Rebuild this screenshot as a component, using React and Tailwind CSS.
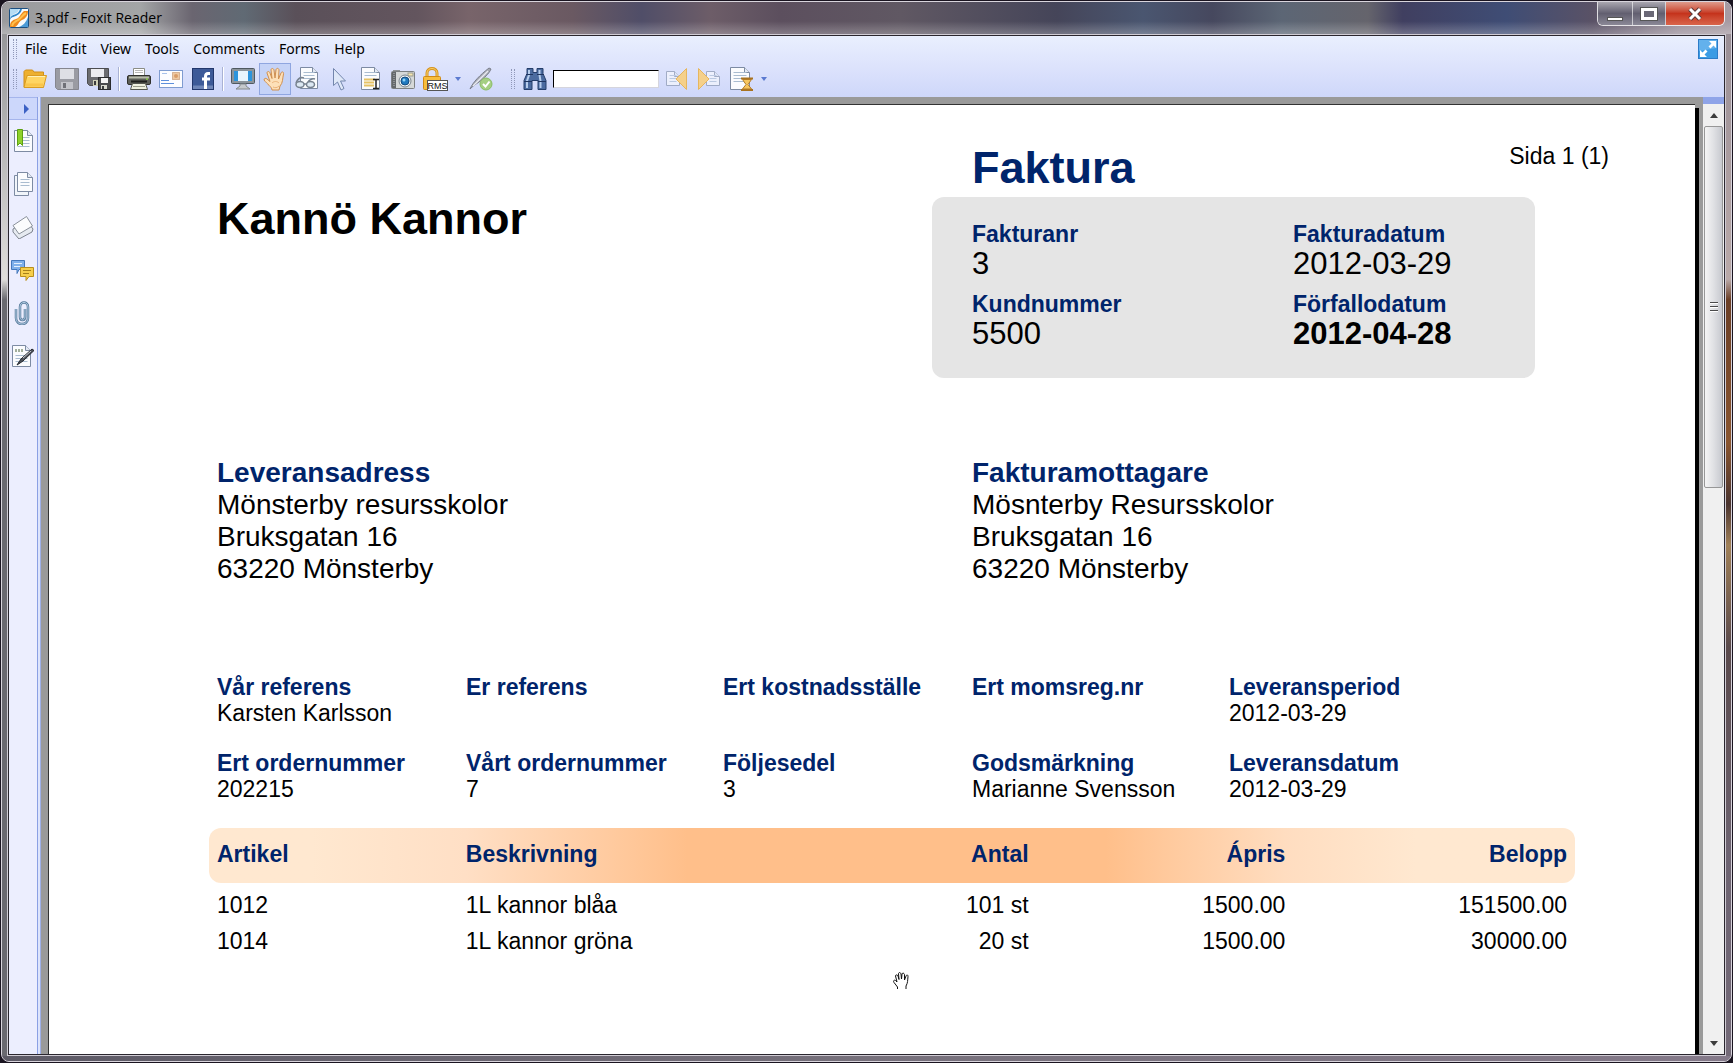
import React from 'react';

const menuItems = ['File', 'Edit', 'View', 'Tools', 'Comments', 'Forms', 'Help'];

const references = [
  [
    { label: 'Vår referens', value: 'Karsten Karlsson' },
    { label: 'Er referens', value: '' },
    { label: 'Ert kostnadsställe', value: '' },
    { label: 'Ert momsreg.nr', value: '' },
    { label: 'Leveransperiod', value: '2012-03-29' },
  ],
  [
    { label: 'Ert ordernummer', value: '202215' },
    { label: 'Vårt ordernummer', value: '7' },
    { label: 'Följesedel', value: '3' },
    { label: 'Godsmärkning', value: 'Marianne Svensson' },
    { label: 'Leveransdatum', value: '2012-03-29' },
  ],
];

const rows = [
  { article: '1012', text: '1L kannor blåa', qty: '101 st', price: '1500.00', sum: '151500.00' },
  { article: '1014', text: '1L kannor gröna', qty: '20 st', price: '1500.00', sum: '30000.00' },
];

/* ---------- icons ---------- */

function Icon({ children }) {
  return (
    <svg width="24" height="24" viewBox="0 0 24 24" fill="none" className="shrink-0" aria-hidden="true">
      {children}
    </svg>
  );
}

// Sheet of paper with a folded corner, used as a base by several icons
function Sheet({ x = 3, y = 1, w = 18, h = 21, lines = [8, 11, 14, 17] }) {
  return (
    <>
      <path d={`M${x} ${y}h${w - 5}l5 5v${h - 5}h${-w}z`} fill="#fbfcfe" stroke="#7d8ba3" />
      <path d={`M${x + w - 5} ${y}v5h5`} fill="#e3e9f3" stroke="#7d8ba3" />
      {lines.map(l => (
        <path key={l} d={`M${x + 3} ${l + 0.5}h${w - 6}`} stroke="#a9bcd0" />
      ))}
    </>
  );
}

function FoxitLogo() {
  return (
    <svg width="20" height="20" viewBox="0 0 20 20" className="shrink-0" aria-hidden="true">
      <rect x="0.5" y="0.5" width="19" height="19" rx="1" fill="#f7fafc" stroke="#1d4f80" />
      <path d="M1 1h9c-1 3-2 4-5 5-2 1-3 2-4 5z" fill="#b5dcf5" />
      <path d="M1 12c0-4 3-5 6-6 2-1 3-2 4-5h2c-1 4-3 5-6 7-3 1-5 1-6 4z" fill="#2f86cb" />
      <path d="M19 9v10h-9c5-2 7-5 9-10z" fill="#4b9ad6" />
      <path d="M1 19c0-6 3-7 6-8 4-1 4-5 8-8h4c0 5-3 8-6 9-4 2-3 5-7 7z" fill="#f08a1c" />
      <path d="M3 18c1-4 3-4 6-6 3-1 4-5 8-7" stroke="#ffc04d" strokeWidth="2" fill="none" />
    </svg>
  );
}

const OpenIcon = () => (
  <Icon>
    <path d="M1 20V4.500L2.500 3h7L11 5h9.500v15z" fill="#eeb02f" stroke="#d08f18" />
    <path d="M4 8.500h19.500L20.500 20.500H1z" fill="#ffd563" stroke="#d99c23" />
    <path d="M5 9.500h17" stroke="#fff0b5" />
    <path d="M2 18h18" stroke="#f6bb3a" strokeWidth="3" opacity="0.6" />
  </Icon>
);

const SaveIcon = () => (
  <Icon>
    <path d="M0.500 1.500h23v21H2.500l-2-2z" fill="#9a9ba3" stroke="#85868f" />
    <rect x="5" y="2" width="14" height="10" fill="#dedfe5" />
    <rect x="6" y="15" width="12" height="7" fill="#c2c3ca" />
    <rect x="8" y="16" width="3" height="5" fill="#6f7078" />
  </Icon>
);

const SaveAsIcon = () => (
  <Icon>
    <path d="M0.500 1.500h21v17H2.500l-2-2z" fill="#6b6c70" stroke="#4c4d51" />
    <rect x="4" y="2" width="13" height="8" fill="#ececf0" />
    <rect x="6" y="13" width="6" height="6" fill="#cfd0b8" />
    <rect x="7" y="14" width="2" height="4" fill="#3b3c3e" />
    <rect x="11.5" y="10.5" width="12" height="12" fill="#4a4b4e" stroke="#2a2b2d" />
    <rect x="14" y="11" width="7" height="5" fill="#f4f4f4" />
    <rect x="14" y="18" width="6" height="4" fill="#d9dad0" />
    <rect x="15" y="19" width="2" height="3" fill="#3b3c3e" />
  </Icon>
);

const PrintIcon = () => (
  <Icon>
    <path d="M6.500 9V1.500h11V9" fill="#fff" stroke="#8b8d85" />
    <path d="M8 3.500h8M8 5.500h8" stroke="#b9b9b9" />
    <rect x="0.5" y="8.5" width="23" height="9" rx="1.5" fill="#5c5e58" stroke="#30312d" />
    <path d="M2 10.500h20" stroke="#b8bbab" strokeWidth="2" />
    <path d="M4 14.500h16" stroke="#1d1e1b" strokeWidth="2" />
    <path d="M3.500 22.500l2-6h13l2 6z" fill="#eef0df" stroke="#55574f" />
    <path d="M6 19.500h12" stroke="#9b9e8c" />
    <circle cx="20" cy="12" r="1" fill="#8ed04b" />
  </Icon>
);

const MailIcon = () => (
  <Icon>
    <rect x="0.5" y="3.5" width="23" height="17" fill="#fdfdff" stroke="#7f9cd0" />
    <rect x="13.5" y="5.5" width="7" height="7" fill="#efc9a2" stroke="#b98055" strokeDasharray="1 1" />
    <circle cx="17" cy="9" r="2" fill="#d89c68" />
    <path d="M2 13.500h8M2 16.500h13" stroke="#5d8fdc" />
    <path d="M3 6.500h5" stroke="#a9c2ea" />
  </Icon>
);

const FacebookIcon = () => (
  <Icon>
    <rect x="1.5" y="1.5" width="21" height="21" fill="#3d5a98" stroke="#22376c" />
    <path d="M2 18.500h20v3.500H2z" fill="#6f86b8" />
    <path d="M19 6.500h-2c-2 0-2.500 1-2.500 3V22M11 12h8" stroke="#fff" strokeWidth="3" />
  </Icon>
);

const ScreenIcon = () => (
  <Icon>
    <rect x="0.5" y="1.5" width="23" height="15" rx="1" fill="#8b949b" stroke="#4f5960" />
    <rect x="3" y="4" width="18" height="10" fill="#2c94dc" />
    <rect x="7" y="4" width="10" height="10" fill="#e8f5fd" />
    <path d="M9 17h6v2l4 3H5l4-3z" fill="#c5c9cc" stroke="#848a8e" />
  </Icon>
);

const HandIcon = () => (
  <Icon>
    <path
      d="M9 23c0-3-5-6-8-10 0-2 2-2 3-1l3 2.500L4 6c0-2 2.500-2 3 0l2 5.500L8 3c0-2 2.500-2 3 0l1 8 1-8.500c1-2 3-1 3 .5l-.5 9 2.500-6c1-2 3-1 2.500 1-1 4-.5 9-3.500 12l-1 4z"
      fill="#fde0b8"
      stroke="#cf8f4e"
    />
    <path d="M10 20c2 1 4 1 6-1M9 16c2-2 5-2 7 0" stroke="#eab27a" />
  </Icon>
);

const ReadIcon = () => (
  <Icon>
    <Sheet x={5.5} y={0.5} w={17} h={21} lines={[5, 8, 11]} />
    <path d="M1 16c2-5 5-6 8-5M13 15c2-3 4-4 7-3" stroke="#77828f" strokeWidth="1.5" />
    <ellipse cx="5" cy="17.5" rx="4" ry="3" fill="#dce8f3" stroke="#77828f" strokeWidth="1.5" />
    <ellipse cx="15.5" cy="17.5" rx="4" ry="3" fill="#dce8f3" stroke="#77828f" strokeWidth="1.5" />
    <path d="M9 17h2.500" stroke="#77828f" strokeWidth="1.5" />
  </Icon>
);

const ArrowIcon = () => (
  <Icon>
    <path d="M6.500 1.500v17l4-3.500 3.500 8 3-1.500-3.500-7.500h5z" fill="#dfe8f8" stroke="#7386ac" />
  </Icon>
);

const TextSelectIcon = () => (
  <Icon>
    <Sheet x={2.5} y={0.5} w={18} h={22} lines={[5, 8]} />
    <path d="M5 12.500h11M5 15.500h10M5 18.500h10" stroke="#e6c264" strokeWidth="2" />
    <path d="M14 12.500h6M14 21.500h6M17 12v10" stroke="#222" strokeWidth="1.5" />
  </Icon>
);

const CameraIcon = () => (
  <Icon>
    <path d="M2 3h7v3H2z" fill="#8f9396" />
    <rect x="0.5" y="4.5" width="23" height="17" rx="1" fill="#d5d8d8" stroke="#7c8082" />
    <rect x="1" y="5" width="4" height="16" fill="#64686b" />
    <path d="M3 6v14" stroke="#b5b9bb" strokeDasharray="1 1" />
    <rect x="17" y="6" width="5" height="3" fill="#f5e6b0" stroke="#9b9b90" />
    <circle cx="14" cy="14" r="6" fill="#eff1f2" stroke="#7a858f" />
    <circle cx="14" cy="14" r="4" fill="#2179bf" stroke="#124a7e" />
    <circle cx="13" cy="13" r="1.5" fill="#8fd3f8" />
  </Icon>
);

const RmsIcon = () => (
  <svg width="26" height="24" viewBox="0 0 26 24" className="shrink-0" aria-hidden="true">
    <path d="M5 11V6c0-6 10-6 10 0v5" fill="none" stroke="#d6941f" strokeWidth="3" />
    <path d="M5 11V6c0-6 10-6 10 0v5" fill="none" stroke="#f9cf69" />
    <rect x="1.5" y="9.5" width="17" height="13" rx="1" fill="#f7bd3d" stroke="#cf8a17" />
    <rect x="5.5" y="13.5" width="20" height="10" fill="#fff" stroke="#555" />
    <text x="15.5" y="22" fontSize="9" fontFamily="Liberation Sans, sans-serif" textAnchor="middle" fill="#111">RMS</text>
  </svg>
);

const SignIcon = () => (
  <Icon>
    <path d="M1 22C4 15 11 8 20 1l2 1c-2 5-7 9-12 13-3 2-6 4-9 7z" fill="#a5a9b3" stroke="#7b7f8b" />
    <path d="M4 19L19 4" stroke="#e8eaf0" strokeWidth="1.5" />
    <circle cx="17" cy="17" r="6" fill="#a5cf83" stroke="#8bbd66" />
    <path d="M14 17l2.500 2.500L20.500 14.500" stroke="#fff" strokeWidth="2" />
  </Icon>
);

const BinocularsIcon = () => (
  <Icon>
    <path d="M4 1.500h6v4h4v-4h6v5l3 7v9h-8v-9h-6v9H1v-9l3-7z" fill="#4b6ba0" stroke="#253e6a" />
    <path d="M6 3v5l-2 6v7M16.500 3v5l1 6v7" stroke="#b6cdec" strokeWidth="2" />
    <path d="M3 7.500h7M14 7.500h7M1 14.500h8M15 14.500h8" stroke="#1f3560" />
  </Icon>
);

const PrevHitIcon = () => (
  <Icon>
    <g opacity="0.6">
      <Sheet x={1.5} y={4.5} w={13} h={14} lines={[8, 11, 14]} />
    </g>
    <path d="M21.500 1.500v21L11 12z" fill="#f5d08a" stroke="#e6b65f" />
  </Icon>
);

const NextHitIcon = () => (
  <Icon>
    <g opacity="0.6">
      <Sheet x={9.5} y={4.5} w={13} h={14} lines={[8, 11, 14]} />
    </g>
    <path d="M1.500 1.500v21L12 12z" fill="#f5d08a" stroke="#e6b65f" />
  </Icon>
);

const HistoryIcon = () => (
  <Icon>
    <Sheet x={1.5} y={0.5} w={19} h={22} lines={[5, 8, 11, 14]} />
    <path d="M12 11.500h12M12 23h12" stroke="#a87220" strokeWidth="2" />
    <path d="M13.500 12.500h9L19 17.500l3.500 4.500h-9l3.500-4.500z" fill="#f6c65f" stroke="#b47b24" />
  </Icon>
);

const BookmarkIcon = () => (
  <Icon>
    <Sheet x={3.5} y={1.5} w={18} h={21} lines={[8, 11, 14, 17]} />
    <path d="M6.500 0.500h5v16L9 14l-2.500 2.500z" fill="#8ed12c" stroke="#5da013" />
  </Icon>
);

const PagesIcon = () => (
  <Icon>
    <path d="M3.500 3.500h14v20h-14z" fill="#f1f5fa" stroke="#7d8ba3" />
    <Sheet x={6.5} y={0.5} w={15} h={19} lines={[7, 10, 13]} />
  </Icon>
);

const LayersIcon = () => (
  <Icon>
    <path d="M2 14l14-8 6 8-1 3-13 7-6-7z" fill="#e6eaf0" stroke="#7d838d" />
    <path d="M2 10.500L15.500 1.500l6 9.500L8 19z" fill="#fbfcfd" stroke="#8a919b" />
  </Icon>
);

const CommentsIcon = () => (
  <Icon>
    <path d="M0.500 2.500h13v9H8l-2 4v-4H0.500z" fill="#7fb0ea" stroke="#4478bb" />
    <path d="M3 5.500h8M3 8.500h6" stroke="#e3f0fd" />
    <path d="M9.500 9.500h13v9H18l-3 4v-4H9.500z" fill="#f6cf4c" stroke="#b98f1c" />
    <path d="M12 12.500h8M12 15.500h6" stroke="#a5801a" />
  </Icon>
);

const ClipIcon = () => (
  <Icon>
    <path d="M5 8v9c0 8 12 8 12 0V6c0-6-8-6-8 0v10c0 4 5 4 5 0V8" stroke="#54789a" strokeWidth="2.5" />
    <path d="M5 8v9c0 8 12 8 12 0V6c0-6-8-6-8 0v10c0 4 5 4 5 0V8" stroke="#b7d0e4" />
  </Icon>
);

const SignPanelIcon = () => (
  <Icon>
    <Sheet x={1.5} y={1.5} w={18} h={21} lines={[11, 14, 17]} />
    <path d="M4 6.500h9" stroke="#a3b09c" strokeWidth="3" strokeDasharray="2 1" />
    <path d="M6 21l4-6L21 5l2 1.500L12 17z" fill="#4d525b" stroke="#24272c" />
    <path d="M12 14l8-7" stroke="#c8ccd3" />
  </Icon>
);

const sidePanels = [
  { name: 'Bookmarks', Glyph: BookmarkIcon },
  { name: 'Pages', Glyph: PagesIcon },
  { name: 'Layers', Glyph: LayersIcon },
  { name: 'Comments panel', Glyph: CommentsIcon },
  { name: 'Attachments', Glyph: ClipIcon },
  { name: 'Signatures', Glyph: SignPanelIcon },
];

/* ---------- window chrome ---------- */

// Aero glass: the desktop shines through as soft blotches of colour
function TitleBar() {
  return (
    <header className="shrink-0 bg-[linear-gradient(90deg,#9a9a9d_0%,#a3a5a6_8%,#6a6570_11%,#606a74_14%,#5a5059_17%,#63555e_24%,#78646a_27%,#6a5962_33%,#504e68_37%,#6d5d68_41%,#5c4f5e_45%,#605863_52%,#454559_61%,#4a5670_66%,#46485e_70%,#5c6675_74%,#65646c_79%,#403f60_81%,#3f4d75_87%,#5a5266_92%,#9a8f9a_97%,#a79ba3_100%)]">
      <div className="flex h-8 items-start justify-between bg-linear-to-b from-transparent from-60% to-white/25">
        <div className="flex items-center gap-1.5 pt-1.5 pl-[7px]">
          <FoxitLogo />
          <h1 className="font-['Open_Sans',sans-serif] text-[14px] leading-5 text-black">3.pdf - Foxit Reader</h1>
        </div>
        <div className="mr-1.5 flex h-6 overflow-hidden rounded-b-md border border-t-0 border-white/80">
          <button
            aria-label="Minimize"
            className="flex w-[35px] items-end justify-center border-r border-white/60 bg-linear-to-b from-[#aaa7b0] via-[#625f70] to-[#8a8896] pb-1"
          >
            <span className="h-1 w-4 border border-[#555] bg-white" />
          </button>
          <button
            aria-label="Maximize"
            className="flex w-[33px] items-center justify-center border-r border-white/60 bg-linear-to-b from-[#aaa7b0] via-[#625f70] to-[#8a8896]"
          >
            <span className="h-3 w-4 border-3 border-white bg-[#6a6876] outline outline-[#555]" />
          </button>
          <button
            aria-label="Close"
            className="flex w-[58px] items-center justify-center bg-linear-to-b from-[#dd9a8b] via-[#c5331c] to-[#d9644a]"
          >
            <svg width="16" height="14" viewBox="0 0 16 14" aria-hidden="true">
              <path d="M3 2l10 10M13 2L3 12" stroke="#5c3a3a" strokeWidth="5" />
              <path d="M3 2l10 10M13 2L3 12" stroke="#fff" strokeWidth="3" />
            </svg>
          </button>
        </div>
      </div>
    </header>
  );
}

function Grip() {
  return <span className="h-5 w-1 shrink-0 border-x border-dotted border-[#8f97b8]" />;
}

function ToolButton({ label, active, children }) {
  return (
    <button
      aria-label={label}
      className={
        active
          ? 'flex h-8 w-8 items-center justify-center border border-[#8fa6e0] bg-[#c5d3f7]'
          : 'flex h-8 w-8 items-center justify-center'
      }
    >
      {children}
    </button>
  );
}

function Divider() {
  return <span className="mx-[3px] h-6 w-0.5 border-l border-[#a9b2d4] bg-white" />;
}

function DropArrow() {
  return (
    <svg width="6" height="4" viewBox="0 0 6 4" className="shrink-0" aria-hidden="true">
      <path d="M0 0h6L3 4z" fill="#5b7ad0" />
    </svg>
  );
}

function Toolbars() {
  return (
    <div className="flex h-[61px] shrink-0 flex-col bg-linear-to-b from-[#e9effe] via-[#dde3fc] to-[#ced7fa]">
      <div className="flex h-[26px] items-center pr-1.5 pl-1">
        <Grip />
        <nav className="flex flex-1 gap-3.5 pl-2">
          {menuItems.map(item => (
            <button key={item} className="font-['Noto_Sans',sans-serif] text-[14px] leading-5 text-black">
              {item}
            </button>
          ))}
        </nav>
        <button aria-label="Full screen" className="h-5 w-5">
          <svg width="20" height="20" viewBox="0 0 20 20" aria-hidden="true">
            <rect x="0.5" y="0.5" width="19" height="19" fill="#3b9be4" stroke="#2c7cc8" />
            <path d="M1 1h18v8L1 12z" fill="#7fc0f2" opacity="0.6" />
            <path d="M11 2h7v7l-2.500-2.500-3 3-2-2 3-3zM9 18H2v-7l2.500 2.500 3-3 2 2-3 3z" fill="#fff" />
          </svg>
        </button>
      </div>
      <div className="flex h-[35px] items-center pb-0.5 pl-1">
        <Grip />
        <div className="flex items-center pl-0.5">
          <ToolButton label="Open"><OpenIcon /></ToolButton>
          <ToolButton label="Save"><SaveIcon /></ToolButton>
          <ToolButton label="Save as"><SaveAsIcon /></ToolButton>
          <Divider />
          <ToolButton label="Print"><PrintIcon /></ToolButton>
          <ToolButton label="Email"><MailIcon /></ToolButton>
          <ToolButton label="Facebook"><FacebookIcon /></ToolButton>
          <Divider />
          <ToolButton label="Full screen view"><ScreenIcon /></ToolButton>
          <ToolButton label="Hand tool" active><HandIcon /></ToolButton>
          <ToolButton label="Reading mode"><ReadIcon /></ToolButton>
          <ToolButton label="Select annotation"><ArrowIcon /></ToolButton>
          <ToolButton label="Select text"><TextSelectIcon /></ToolButton>
          <ToolButton label="Snapshot"><CameraIcon /></ToolButton>
          <ToolButton label="RMS protection"><RmsIcon /></ToolButton>
          <button aria-label="RMS options" className="pl-1"><DropArrow /></button>
          <div className="pl-1">
            <ToolButton label="Sign"><SignIcon /></ToolButton>
          </div>
        </div>
        <div className="flex items-center pl-3.5">
          <Grip />
          <div className="flex items-center pl-1">
            <ToolButton label="Search"><BinocularsIcon /></ToolButton>
            <input
              aria-label="Find text"
              className="mx-0.5 h-[18px] w-[106px] border border-t-black border-r-[#d5d5dd] border-b-[#d5d5dd] border-l-black bg-white px-1 text-xs outline-none"
            />
            <ToolButton label="Previous hit"><PrevHitIcon /></ToolButton>
            <ToolButton label="Next hit"><NextHitIcon /></ToolButton>
            <ToolButton label="Find options"><HistoryIcon /></ToolButton>
            <button aria-label="More find options" className="pl-1"><DropArrow /></button>
          </div>
        </div>
      </div>
    </div>
  );
}

function SideBar() {
  return (
    <aside className="flex w-8 shrink-0 border-r border-[#9fb0e8] bg-[#dde4fc]">
      <div className="flex w-[29px] flex-col items-center border-r border-[#8ba0e4] bg-[#eceefe]">
        <button
          aria-label="Expand panel"
          className="flex h-[23px] w-full items-center justify-end border-y border-[#a5b5ec] bg-[#ccd7fb] pr-2"
        >
          <svg width="5" height="10" viewBox="0 0 5 10" aria-hidden="true">
            <path d="M0 0l5 5-5 5z" fill="#3b61c4" />
          </svg>
        </button>
        <div className="flex flex-col gap-[19px] pt-[9px]">
          {sidePanels.map(({ name, Glyph }) => (
            <button key={name} aria-label={name}>
              <Glyph />
            </button>
          ))}
        </div>
      </div>
    </aside>
  );
}

function ScrollBar() {
  return (
    <div className="flex w-[21px] shrink-0 flex-col bg-[#f0f0f0]">
      <div className="h-[7px] shrink-0 bg-[#8fa4e8]" />
      <button aria-label="Scroll up" className="flex h-[22px] shrink-0 items-center justify-center">
        <svg width="8" height="5" viewBox="0 0 8 5" aria-hidden="true">
          <path d="M0 5l4-5 4 5z" fill="#3c3c3c" />
        </svg>
      </button>
      <div className="flex flex-1 flex-col">
        <div className="flex h-[40%] w-[19px] flex-col items-center justify-center gap-0.5 self-center rounded-xs border border-[#979797] bg-linear-to-r from-[#f5f5f5] via-[#e0e1e4] to-[#c7c9cf]">
          <span className="h-0.5 w-2 border-t border-[#4a4a4a] bg-white" />
          <span className="h-0.5 w-2 border-t border-[#4a4a4a] bg-white" />
          <span className="h-0.5 w-2 border-t border-[#4a4a4a] bg-white" />
        </div>
      </div>
      <button aria-label="Scroll down" className="flex h-[22px] shrink-0 items-center justify-center">
        <svg width="8" height="5" viewBox="0 0 8 5" aria-hidden="true">
          <path d="M0 0l4 5 4-5z" fill="#3c3c3c" />
        </svg>
      </button>
    </div>
  );
}

/* ---------- invoice ---------- */

function BoxField({ label, value, strong }) {
  return (
    <div>
      <dt className="text-[23px] leading-7 font-bold text-[#00246b]">{label}</dt>
      <dd className={strong ? 'text-[31px] leading-8 font-bold' : 'text-[31px] leading-8'}>{value}</dd>
    </div>
  );
}

function Address({ title, name }) {
  return (
    <section>
      <h3 className="font-bold text-[#00246b]">{title}</h3>
      <address className="not-italic">
        {name}
        <br />
        Bruksgatan 16
        <br />
        63220 Mönsterby
      </address>
    </section>
  );
}

function ItemTable() {
  return (
    <table className="w-full table-fixed text-[23px] leading-9">
      <thead>
        <tr className="h-[55px] text-[#00246b]">
          <th className="w-[18.8%] rounded-l-xl bg-linear-to-r from-[#ffe8d0] from-40% to-[#ffdfc5] pb-1 pl-2 text-left">Artikel</th>
          <th className="w-[30%] bg-linear-to-r from-[#ffdfc5] to-[#ffbf8a] to-54% pb-1 text-left">Beskrivning</th>
          <th className="w-[11.2%] bg-[#ffbf8a] pb-1 text-right">Antal</th>
          <th className="w-[18.8%] bg-linear-to-r from-[#ffbf8a] from-30% to-[#ffddc0] pb-1 text-right">Ápris</th>
          <th className="w-[21.2%] rounded-r-xl bg-linear-to-r from-[#ffddc0] to-[#ffe8d0] to-45% pr-2 pb-1 text-right">Belopp</th>
        </tr>
      </thead>
      <tbody className="before:block before:h-1 before:content-['']">
        {rows.map(row => (
          <tr key={row.article}>
            <td className="pl-2">{row.article}</td>
            <td>{row.text}</td>
            <td className="text-right">{row.qty}</td>
            <td className="text-right">{row.price}</td>
            <td className="pr-2 text-right">{row.sum}</td>
          </tr>
        ))}
      </tbody>
    </table>
  );
}

// Mouse pointer of the hand tool, lying over the page
function HandCursor() {
  return (
    <svg
      width="17"
      height="18"
      viewBox="0 0 17 18"
      className="absolute top-[867px] left-[51.3%]"
      aria-hidden="true"
    >
      <path
        d="M4.500 17v-2L1 10.500C0 9 1 7.500 2.500 8.500L4 10 2.500 4c0-1.500 2-1.500 2.500 0l1 3.500L5.500 2c0-2 2-2 2.500 0l.5 5L9 2c.5-1.500 2-1 2.500.5L11.500 8l1.500-4c.5-1.500 2.500-1 2 .5-.5 4 0 6-2 9.500V17"
        fill="#fff"
        stroke="#111"
      />
    </svg>
  );
}

function Invoice() {
  return (
    <main className="flex min-w-0 flex-1 overflow-hidden bg-[#9a9a9a] pt-[7px] pr-2 pl-[7px]">
      <article className="relative flex-1 border-t border-l border-[#333] bg-white pt-[37px] font-['Liberation_Sans',Arial,sans-serif] text-black shadow-[4px_4px_0_#000]">
        <div className="grid grid-cols-[715fr_677fr] pr-[86px] pl-[168px]">
          <p className="pt-[53px] text-[45px] leading-[48px] font-bold">Kannö Kannor</p>
          <div>
            <div className="flex items-start justify-between pb-[3px] pl-10">
              <h2 className="text-[45px] leading-[52px] font-bold text-[#00246b]">Faktura</h2>
              <p className="text-[23px] leading-7">Sida 1 (1)</p>
            </div>
            <dl className="mr-[74px] grid grid-cols-[321fr_242fr] gap-y-2.5 rounded-xl bg-[#e5e5e5] pt-[23px] pb-7 pl-10">
              <BoxField label="Fakturanr" value="3" />
              <BoxField label="Fakturadatum" value="2012-03-29" />
              <BoxField label="Kundnummer" value="5500" />
              <BoxField label="Förfallodatum" value="2012-04-28" strong />
            </dl>
          </div>
        </div>

        <div className="grid grid-cols-[755fr_595fr] pt-[79px] pr-32 pl-[168px] text-[28px] leading-8">
          <Address title="Leveransadress" name="Mönsterby resursskolor" />
          <Address title="Fakturamottagare" name="Mösnterby Resursskolor" />
        </div>

        <div className="flex flex-col gap-6 pt-[89px] pr-32 pl-[168px] text-[23px] leading-[26px]">
          {references.map((line, i) => (
            <dl key={i} className="grid grid-cols-[249fr_257fr_249fr_257fr_338fr]">
              {line.map(field => (
                <div key={field.label} className="whitespace-nowrap">
                  <dt className="font-bold text-[#00246b]">{field.label}</dt>
                  <dd>{field.value}</dd>
                </div>
              ))}
            </dl>
          ))}
        </div>

        <div className="pt-[26px] pr-[120px] pl-40">
          <ItemTable />
        </div>
        <HandCursor />
      </article>
    </main>
  );
}

export default function App() {
  return (
    <div className="h-screen bg-[#1a1420] p-px">
      <div className="flex h-full flex-col overflow-hidden rounded-lg border border-[#d8d4dc] bg-[#77717c]">
        <TitleBar />
        <div className="flex min-h-0 flex-1">
          <div className="w-[5px] shrink-0 bg-linear-to-b from-[#97979a] via-[#e0dedc] via-24% to-[#6a6970] to-26%" />
          <div className="flex min-w-0 flex-1 border border-[#d0ccd4]">
            <div className="flex min-w-0 flex-1 flex-col border border-[#2a262e]">
              <Toolbars />
              <div className="flex min-h-0 flex-1">
                <SideBar />
                <Invoice />
                <ScrollBar />
              </div>
            </div>
          </div>
          <div className="w-[5px] shrink-0 bg-[linear-gradient(180deg,#9a8f96_0%,#b9a9a8_24%,#6b3f26_26%,#8a5630_40%,#4a3430_46%,#a08058_50%,#5a4a4c_60%,#6e6472_80%,#746a78_100%)]" />
        </div>
        <div className="h-[5px] shrink-0 bg-linear-to-r from-[#5d5a66] via-[#77717c] to-[#857a8a]" />
      </div>
    </div>
  );
}
